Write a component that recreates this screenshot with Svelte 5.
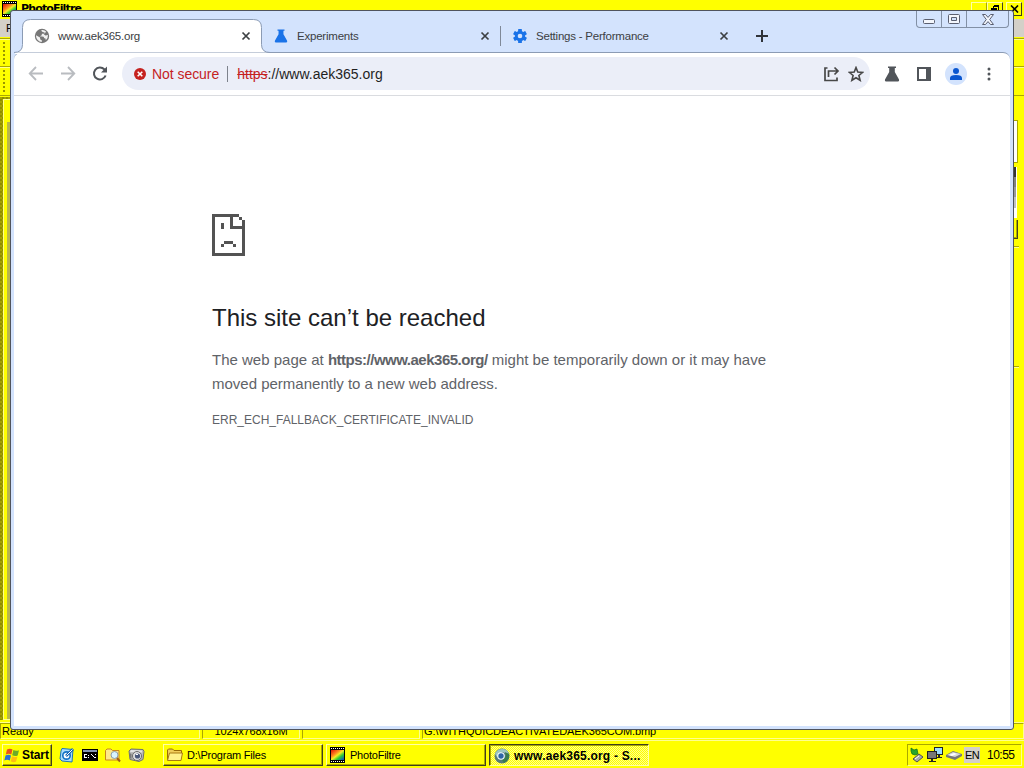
<script lang="ts">
  const tabs = [
    { title: 'www.aek365.org', icon: 'globe', active: true },
    { title: 'Experiments', icon: 'flask', active: false },
    { title: 'Settings - Performance', icon: 'gear', active: false },
  ];

  const tasks = [
    { label: 'D:\\Program Files', icon: 'folder', active: false },
    { label: 'PhotoFiltre', icon: 'film', active: false },
    { label: 'www.aek365.org - S...', icon: 'browser', active: true },
  ];

  // teeth of the settings gear, in degrees
  const teeth = [0, 60, 120];
  const perforations = [1, 3, 5, 7, 9, 11, 13];
</script>

{#snippet film()}
  <svg width="16" height="16" viewBox="0 0 16 16" shape-rendering="crispEdges">
    <defs>
      <linearGradient id="film-colors" x1="0" y1="0" x2="1" y2="1">
        <stop offset="0" stop-color="#e01008" />
        <stop offset=".35" stop-color="#ff8a20" />
        <stop offset=".5" stop-color="#f5ed20" />
        <stop offset=".7" stop-color="#28c838" />
        <stop offset="1" stop-color="#1040d0" />
      </linearGradient>
    </defs>
    <path fill="#000" d="M0 0h15v16H0z" />
    <path fill="url(#film-colors)" d="M1 3h13v10H1z" />
    {#each perforations as x}
      <path fill="#fff" d="M{x} 1h1v1h-1zM{x} 14h1v1h-1z" />
    {/each}
  </svg>
{/snippet}

{#snippet flask(color: string, size: number)}
  <svg width={size} height={size} viewBox="0 0 16 16">
    <path fill={color} d="M4 .5h8V2h-1.200v4l4.200 7.500q.6 2-1 2H2q-1.600 0-1-2L5.200 6V2H4z" />
  </svg>
{/snippet}

{#snippet tabIcon(name: string)}
  {#if name === 'globe'}
    <svg width="16" height="16" viewBox="0 0 16 16">
      <circle cx="8" cy="8" r="7.200" fill="#777" />
      <path fill="#fff" d="M2 7.200 6 9.500l.3 2 1.500.8v1.600C4.700 13.800 2 11 2 7.200zM7.200 2.200q3-.7 5 1.500L10.500 5.500 8 5.700 7.500 7.500 5.600 8.200 8 8.500l1.600.2.7 1.600 1.200.3.300 1.600q2.400-2 2.200-5.200l-2.600.4-1.600-1.100.9-1.800-2-.4-1-.8z" opacity=".9" />
    </svg>
  {:else if name === 'flask'}
    {@render flask('#1a73e8', 14)}
  {:else}
    <svg width="16" height="16" viewBox="-8 -8 16 16">
      {#each teeth as angle}
        <rect x="-1.900" y="-7" width="3.800" height="14" rx=".6" fill="#1a73e8" transform="rotate({angle})" />
      {/each}
      <circle r="5.200" fill="#1a73e8" />
      <circle r="2.300" fill="#d3e3fd" />
    </svg>
  {/if}
{/snippet}

<div class="desktop">
  <div class="photofiltre">
    <div class="pf-title">
      <span class="pf-icon">{@render film()}</span>
      <span class="pf-name">PhotoFiltre</span>
      <div class="pf-buttons">
        <span class="pf-btn faint"></span>
        <span class="pf-btn">
          <svg width="10" height="9" viewBox="0 0 10 9" fill="none" stroke="#000" shape-rendering="crispEdges"><path d="M3.500.500h5v5h-2M3 1.500h6M1.500 3.500h5v4h-5zM1 4.500h6M3.500 1v2" /></svg>
        </span>
        <span class="pf-btn close">
          <svg width="9" height="8" viewBox="0 0 9 8" stroke="#000" stroke-width="1.600"><path d="m1 .5 7 7m0-7-7 7" /></svg>
        </span>
      </div>
    </div>
    <div class="pf-menu">File</div>
    <div class="pf-toolbar first"><i></i></div>
    <div class="pf-toolbar"><i></i></div>
    <div class="pf-body">
      <div class="pf-canvas"><div></div></div>
      <div class="pf-panel">
        <div class="pf-preview"></div>
        <div class="pf-swatches"></div>
        <div class="pf-option"></div>
        <hr />
        <hr class="lower" />
      </div>
    </div>
    <div class="pf-status">
      <span class="ready">Ready</span>
      <span class="size">1024x768x16M</span>
      <span class="gap"></span>
      <span class="path">G:\WITHQUICDEACTIVATEDAEK365COM.bmp</span>
    </div>
  </div>

  <div class="taskbar">
    <button class="start">
      <svg width="17" height="17" viewBox="0 0 17 17">
        <path fill="#e9501d" d="M3 2.500q3-1.500 5.500 0L7.300 7.600q-2.700-1.500-5.500 0z" />
        <path fill="#6cab29" d="M9.400 3q2.700 1.400 5.600.200L13.700 8.500q-2.800 1.200-5.500-.300z" />
        <path fill="#2b70d5" d="M1.500 8.500q3-1.400 5.500 0L5.800 13.600q-2.700-1.500-5.500 0z" />
        <path fill="#ffbd12" d="M8 9.200q2.600 1.400 5.400.200l-1.300 5.200q-2.800 1.200-5.400-.300z" />
      </svg>
      Start
    </button>

    <div class="quick">
      <svg width="16" height="16" viewBox="0 0 16 16">
        <path fill="#a8dcfa" stroke="#1773bd" d="m3 1.500 11 1-1 12.500-10-1L1 12l1-8z" />
        <circle cx="7.500" cy="8.500" r="3.700" fill="#fff" stroke="#1473c5" stroke-width="1.700" />
        <path stroke="#1365b5" stroke-width="2.500" d="m7 9 7-7" /><path stroke="#fff" d="m7.500 8.500 6-6" />
      </svg>
      <svg width="16" height="16" viewBox="0 0 16 16" shape-rendering="crispEdges">
        <path fill="#000" d="M0 2h16v12H0z" /><path fill="#8495b4" d="M1 3h14v2H1z" />
        <path stroke="#fff" fill="none" d="M5 7.500H2.500v3H5M6.500 8v1m0 1v1M9 7l4 4m.500-4v1m0 2v1" />
      </svg>
      <svg width="16" height="16" viewBox="0 0 16 16">
        <path fill="#ffe889" stroke="#c88420" d="M.5 3.500 2 2h4l1.500 1.500H14v9.500H.5z" />
        <circle cx="9.500" cy="8" r="3.500" fill="#d8f3ff" stroke="#8b9caa" /><path stroke="#a25b16" stroke-width="2" d="m12 11 3 3.500" />
      </svg>
      <svg width="17" height="16" viewBox="0 0 17 16">
        <path fill="#b8b8b8" stroke="#707070" d="m1 4 2-2 12 .5 1 2-1 8-4 2-9-2z" />
        <path fill="#e4e4e4" d="m3 3 11 .5v2L2 5z" /><path fill="#777" d="m1.500 6 2 1v5l-1.500-1z" />
        <circle cx="9" cy="9" r="4.500" fill="#e0e0e0" stroke="#6a6a6a" />
        <circle cx="9.500" cy="9" r="2.600" fill="#4a587b" /><path fill="#fff" d="M8 7h2v1H8z" />
      </svg>
    </div>

    <div class="tasks">
      {#each tasks as task}
        <button class="task" class:active={task.active}>
          {#if task.icon === 'folder'}
            <svg width="16" height="16" viewBox="0 0 16 16">
              <path fill="#f1cd5a" stroke="#9a6b08" d="M.5 13V3l1-1h4l1.500 1.500h7.500V6" />
              <path fill="#fff18a" stroke="#a87a12" d="M.5 13.500 2.500 6h13l-1.500 7.500z" />
            </svg>
          {:else if task.icon === 'film'}
            {@render film()}
          {:else}
            <svg width="16" height="16" viewBox="0 0 16 16">
              <circle cx="8" cy="8" r="7.500" fill="#567b78" />
              <path fill="#9bc5c0" d="M1 6Q3 .5 9 1q4 0 6 5L8 4 3 9z" />
              <path fill="#397d4d" d="M15 6q1 6-5 9l-2-3 4-4-1-4z" />
              <circle cx="7" cy="8" r="3.800" fill="#f5ffff" /><circle cx="7" cy="8" r="2.700" fill="#2d65a6" />
            </svg>
          {/if}
          <span>{task.label}</span>
        </button>
      {/each}
    </div>

    <div class="tray">
      <svg width="16" height="16" viewBox="0 0 16 16">
        <path fill="#28a32b" stroke="#096d19" stroke-width=".7" d="m2 1 3 2 3-1 1 5-3 1-3-1-1-3z" />
        <path fill="#a9a9a9" stroke="#505050" d="m4 12 6-5 4 3-6 5z" /><path stroke="#fff" d="m6 12 4-3" />
      </svg>
      <svg width="17" height="16" viewBox="0 0 17 16" shape-rendering="crispEdges">
        <path fill="#9cdcff" stroke="#222" d="M7.500.5h8v7h-8z" /><path fill="#222" d="M11 8h2v2h-2zm-2 2h6v1H9z" />
        <path fill="#777" stroke="#222" d="M.5 4.500h9v7h-9z" /><path fill="#222" d="M4 12h2v2H4zm-2 2h7v1H2z" />
      </svg>
      <svg width="16" height="16" viewBox="0 0 16 16">
        <path fill="#777" d="m0 8 7-4 9 3v2l-7 4-9-3z" /><path fill="#d7d7d7" d="m1 8 6-3 8 2-6 3z" /><path fill="#fff" d="m3 8 5-2 3 1-5 2z" />
      </svg>
      <span class="lang">EN</span>
      <span class="clock">10:55</span>
    </div>
  </div>

  <div class="browser">
    <div class="tabstrip">
      {#each tabs as tab, i}
        <div class="tab" class:active={tab.active} class:divided={i === 1}>
          {#if tab.active}
            <!-- outline with the flared feet of the selected tab -->
            <svg class="tab-shape" width="256" height="35" viewBox="0 0 256 35">
              <path fill="#fff" stroke="#8b9bb4" d="M0 33.500q8.500 0 8.500-8V8.500q0-8 8-8h223q8 0 8 8v17q0 8 8.500 8" />
              <path fill="#fff" d="M1 34h254v1H1z" />
            </svg>
          {/if}
          <span class="tab-icon">{@render tabIcon(tab.icon)}</span>
          <span class="tab-title">{tab.title}</span>
          <svg class="tab-close" width="10" height="10" viewBox="0 0 10 10" stroke="#3c4043" stroke-width="1.700"><path d="m1.500 1.500 7 7m0-7-7 7" /></svg>
        </div>
      {/each}
      <svg class="new-tab" width="14" height="14" viewBox="0 0 14 14" stroke="#30343a" stroke-width="2"><path d="M7 1v12M1 7h12" /></svg>
      <div class="window-buttons">
        <span class="minimize"><svg width="12" height="5" viewBox="0 0 12 5"><rect x=".5" y=".5" width="11" height="4" rx="1" fill="#f3f6fc" stroke="#5a5f70" /></svg></span>
        <span><svg width="12" height="10" viewBox="0 0 12 10" fill="#f3f6fc" stroke="#5a5f70"><rect x=".5" y=".5" width="11" height="9" rx="1" /><path fill="#d3e3fd" d="M3.500 3.500h5v3h-5z" /></svg></span>
        <span class="wide"><svg width="12" height="11" viewBox="0 0 12 11" fill="#f3f6fc" stroke="#5a5f70"><path d="M.5.500h3L6 3.400 8.500.500h3L7.700 5.500l3.800 5h-3L6 7.600l-2.500 2.900h-3l3.800-5z" /></svg></span>
      </div>
    </div>

    <div class="page">
      <div class="toolbar">
        <div class="nav">
          <svg width="16" height="16" viewBox="0 0 16 16" fill="none" stroke="#b9bcc0" stroke-width="1.800"><path d="M15 7.500H2M8 1 1.700 7.500 8 14" /></svg>
          <svg width="16" height="16" viewBox="0 0 16 16" fill="none" stroke="#b9bcc0" stroke-width="1.800"><path d="M1 7.500h13M8 1l6.300 6.500L8 14" /></svg>
          <svg width="16" height="16" viewBox="0 0 16 16"><path fill="none" stroke="#51555a" stroke-width="2" d="M13.600 9.500A6 6 0 1 1 12.300 3.300L14 5" /><path fill="#51555a" d="M15 .5v6H9z" /></svg>
        </div>
        <div class="omnibox">
          <svg width="12" height="12" viewBox="0 0 12 12"><circle cx="6" cy="6" r="6" fill="#c5221f" /><path stroke="#fff" stroke-width="1.600" d="m3.700 3.700 4.600 4.600m0-4.600L3.700 8.300" /></svg>
          <span class="insecure">Not secure</span>
          <i></i>
          <span class="url"><s>https</s>://www.aek365.org</span>
          <div class="omni-actions">
            <svg width="17" height="16" viewBox="0 0 17 16" fill="none" stroke="#474747" stroke-width="1.700"><path d="M4.500 2H2v12.500h12V11.500M5.500 11V5H14M11.500 1.500 15 5l-3.500 3.500" /></svg>
            <svg width="16" height="16" viewBox="0 0 16 16" fill="none" stroke="#474747" stroke-width="1.600"><path d="m8 1.600 1.800 4.500 4.900.3-3.800 3.100 1.200 4.800L8 11.700l-4.100 2.600 1.200-4.800-3.800-3.100 4.900-.3z" /></svg>
          </div>
        </div>
        <div class="actions">
          {@render flask('#51555a', 16)}
          <svg class="side-panel" width="16" height="14" viewBox="0 0 16 14"><path fill="#51555a" d="M1 0h14v14H1zm2 2v10h7V2z" fill-rule="evenodd" /></svg>
          <span class="avatar">
            <svg width="14" height="14" viewBox="0 0 14 14" fill="#0b57d0"><circle cx="7" cy="4" r="3" /><path d="M1 13v-2q0-3 6-3t6 3v2z" /></svg>
          </span>
          <svg class="more" width="4" height="14" viewBox="0 0 4 14" fill="#51555a"><circle cx="2" cy="2" r="1.500" /><circle cx="2" cy="7" r="1.500" /><circle cx="2" cy="12" r="1.500" /></svg>
        </div>
      </div>

      <main>
        <svg class="sad-page" width="33" height="42" viewBox="0 0 33 42" fill="#535353" shape-rendering="crispEdges">
          <path d="M0 0h27v3H3v36h27V15H18V3h3v9h9V6h3v36H0zM27 3h3v3h-3zM9 9h3v6H9zM12 27h9v3h-9zM9 30h3v3H9zM21 30h3v3h-3z" />
        </svg>
        <h1>This site can’t be reached</h1>
        <p>The web page at <b>https://www.aek365.org/</b> might be temporarily down or it may have<br />moved permanently to a new web address.</p>
        <div class="error-code">ERR_ECH_FALLBACK_CERTIFICATE_INVALID</div>
      </main>
    </div>
  </div>
</div>

<style>
  :global(body) {
    overflow: hidden;
  }

  .desktop {
    position: relative;
    display: flex;
    flex-direction: column;
    width: 1024px;
    height: 768px;
    overflow: hidden;
    background: #ff0;
    color: #000;
    font-family: "Liberation Sans", Arial, sans-serif;
  }

  .desktop * {
    box-sizing: border-box;
  }

  svg {
    display: block;
    flex: none;
  }

  /* Image editor behind the browser */
  .photofiltre {
    display: flex;
    flex-direction: column;
    height: 740px;
  }

  .pf-title {
    display: flex;
    height: 19px;
    padding: 0 0 0 2px;
  }

  .pf-icon {
    margin-top: 1px;
  }

  .pf-name {
    margin: 2px 0 0 3px;
    font: bold 11px/13px "DejaVu Sans", sans-serif;
    letter-spacing: -0.85px;
  }

  .pf-buttons {
    display: flex;
    margin: 2px 2px 0 auto;
  }

  .pf-btn {
    display: flex;
    justify-content: center;
    width: 16px;
    height: 14px;
    padding-top: 2px;
    border: 1px solid;
    border-color: #ffffa8 #403f20 #403f20 #ffffa8;
  }

  .pf-btn.faint {
    border-right-color: #aaa800;
  }

  .pf-btn.close {
    margin-left: 3px;
  }

  .pf-menu {
    height: 18px;
    padding: 3px 6px;
    background: #d4d0c8;
    font-size: 11px;
    line-height: 13px;
  }

  .pf-toolbar {
    height: 29px;
    padding: 3px;
    border-top: 1px solid #aaa800;
    box-shadow: inset 0 1px #ffff90;
  }

  .pf-toolbar.first {
    height: 28px;
    margin-top: 1px;
  }

  .pf-toolbar i {
    display: block;
    width: 2px;
    height: 22px;
    background: repeating-linear-gradient(#999700 0 2px, transparent 2px 4px);
  }

  .pf-body {
    display: flex;
    justify-content: space-between;
    flex: 1;
    border-top: 1px solid #aaa800;
  }

  .pf-canvas {
    width: 12px;
    margin: 1px 0 2px;
    padding: 2px 0 0 3px;
    background: repeating-conic-gradient(#8f8d00 0 25%, #a5a300 0 50%) 0 0 / 4px 4px;
  }

  .pf-canvas div {
    height: 100%;
    background: linear-gradient(90deg, #ff0 3px, #b8b64c 3px) 0 22px no-repeat, #ff0;
    border: 1px solid #ffff90;
  }

  .pf-panel {
    width: 14px;
    padding: 24px 0 0 3px;
  }

  .pf-preview {
    width: 5px;
    height: 43px;
    background: #fff;
    border: 1px solid #aaa800;
    border-left: 0;
  }

  .pf-swatches {
    width: 4px;
    height: 51px;
    margin-top: 4px;
    background: linear-gradient(#333 0 10px, #808080 10px 20px, #999 20px 30px, #c0c0c0 30px 41px, #fff 41px);
    border-right: 1px solid #fff;
  }

  .pf-option {
    width: 5px;
    height: 19px;
    margin-top: 2px;
    border: 1px solid #403f20;
    border-width: 0 1px 1px 0;
    box-shadow: inset -1px -1px #aaa800;
  }

  .pf-panel hr {
    width: 6px;
    height: 2px;
    margin: 7px 0 0;
    border: 0;
    border-top: 1px solid #aaa800;
    background: #ffff90;
  }

  .pf-panel hr.lower {
    margin-top: 118px;
  }

  .pf-status {
    display: flex;
    height: 18px;
    gap: 2px;
    border-top: 1px solid #ffff90;
    font-size: 11px;
    line-height: 15px;
  }

  .pf-status span {
    height: 16px;
    border: 1px solid;
    border-color: #aaa800 #ffff90 #ffff90 #aaa800;
    white-space: nowrap;
  }

  .pf-status .ready {
    width: 200px;
    padding-left: 1px;
  }

  .pf-status .size {
    width: 98px;
    text-align: center;
    letter-spacing: -0.2px;
  }

  .pf-status .gap {
    width: 118px;
  }

  .pf-status .path {
    flex: 1;
    padding-left: 1px;
    letter-spacing: -0.12px;
  }

  /* Taskbar */
  .taskbar {
    display: flex;
    height: 28px;
    padding: 3px 2px 0;
    border-top: 1px solid #ffff90;
    font-size: 11px;
  }

  button {
    display: flex;
    align-items: center;
    height: 22px;
    padding: 0;
    background: #ff0;
    border: 1px solid;
    border-color: #ffffa8 #403f20 #403f20 #ffffa8;
    box-shadow: inset -1px -1px #aaa800;
    color: #000;
    font-family: inherit;
    font-size: 11px;
  }

  .start {
    width: 50px;
    gap: 1px;
    padding-left: 1px;
    font: bold 12px "Liberation Sans", sans-serif;
    letter-spacing: -0.1px;
  }

  .quick {
    display: flex;
    gap: 7px;
    width: 111px;
    padding: 3px 0 0 7px;
  }

  .tasks {
    display: flex;
    gap: 3px;
  }

  .task {
    width: 160px;
    gap: 4px;
    padding-left: 3px;
    letter-spacing: -0.22px;
    white-space: nowrap;
  }

  .task.active {
    padding: 2px 0 0 4px;
    background: repeating-conic-gradient(#ff0 0 25%, #ffff8c 0 50%) 0 0 / 2px 2px;
    border-color: #403f20 #ffffa8 #ffffa8 #403f20;
    box-shadow: inset 1px 1px #aaa800;
    font-weight: bold;
    font-size: 12px;
    letter-spacing: 0.2px;
  }

  .tray {
    display: flex;
    align-items: center;
    width: 115px;
    height: 22px;
    margin-left: auto;
    padding-left: 1px;
    gap: 2px;
    border: 1px solid;
    border-color: #aaa800 #ffff90 #ffff90 #aaa800;
  }

  .lang {
    width: 16px;
    height: 16px;
    background: #d4d0c8;
    line-height: 17px;
    text-align: center;
    letter-spacing: -0.6px;
  }

  .clock {
    margin-left: 5px;
    font-size: 12px;
    letter-spacing: -0.5px;
  }

  /* Browser window */
  .browser {
    position: absolute;
    left: 10px;
    top: 10px;
    display: flex;
    flex-direction: column;
    width: 1004px;
    height: 720px;
    padding: 0 3px 3px;
    background: #d3e3fd;
    border: 1px solid #50545d;
    border-radius: 3px;
  }

  .tabstrip {
    display: flex;
    align-items: flex-end;
    height: 41px;
    padding-left: 9px;
  }

  .tab {
    position: relative;
    display: flex;
    align-items: center;
    width: 239px;
    height: 33px;
    padding: 0 11px;
    color: #3c4043;
    font-size: 11.5px;
    letter-spacing: -0.22px;
  }

  .tab.divided::after {
    content: '';
    position: absolute;
    right: 0;
    top: 7px;
    width: 1px;
    height: 20px;
    background: #7f8998;
  }

  .tab-shape {
    position: absolute;
    left: -9px;
    top: 0;
    z-index: 1;
  }

  .tab-icon {
    display: flex;
    justify-content: center;
    width: 16px;
    margin-right: 8px;
  }

  .tab-icon,
  .tab-title,
  .tab-close {
    position: relative;
    z-index: 2;
  }

  .tab-close {
    margin-left: auto;
  }

  .new-tab {
    margin: 0 0 9px 15px;
  }

  .window-buttons {
    display: flex;
    align-self: flex-start;
    height: 17px;
    margin: 0 1px 0 auto;
    border: 1px solid #8290a5;
    border-top: 0;
    border-radius: 0 0 4px 4px;
  }

  .window-buttons span {
    display: flex;
    align-items: center;
    justify-content: center;
    width: 25px;
    border-right: 1px solid #8290a5;
  }

  .window-buttons .minimize {
    padding-top: 5px;
  }

  .window-buttons .wide {
    width: 41px;
    border-right: 0;
  }

  .page {
    flex: 1;
    background: #fff;
    border-top: 1px solid #8b9bb4;
    border-radius: 7px 7px 0 0;
  }

  .toolbar {
    display: flex;
    align-items: center;
    height: 43px;
    padding: 0 18px 1px 14px;
    border-bottom: 1px solid #dadce0;
  }

  .nav {
    display: flex;
    gap: 16px;
    width: 94px;
  }

  .omnibox {
    display: flex;
    align-items: center;
    width: 748px;
    height: 33px;
    padding: 0 6px 0 12px;
    background: #ebeef8;
    border-radius: 17px;
    font-size: 14px;
  }

  .insecure {
    margin-left: 6px;
    color: #c5221f;
    letter-spacing: -0.05px;
  }

  .omnibox i {
    width: 1px;
    height: 16px;
    margin: 0 9px 0 8px;
    background: #7d828c;
  }

  .url {
    color: #1f1f1f;
  }

  .url s {
    color: #c5221f;
  }

  .insecure,
  .url {
    padding-top: 1px;
  }

  .omni-actions {
    display: flex;
    gap: 8px;
    margin-left: auto;
  }

  .actions {
    display: flex;
    align-items: center;
    margin-left: 14px;
  }

  .side-panel {
    margin: 0 13px 0 16px;
  }

  .more {
    margin-left: 20px;
  }

  .avatar {
    display: flex;
    align-items: center;
    justify-content: center;
    width: 22px;
    height: 22px;
    background: #d3e3fd;
    border-radius: 50%;
  }

  main {
    padding: 118px 0 0 198px;
    color: #5f6368;
    font-size: 15px;
    line-height: 24px;
  }

  h1 {
    margin: 47px 0 15px;
    color: #202124;
    font-size: 24px;
    font-weight: 400;
    line-height: 30px;
  }

  p {
    margin: 0;
    white-space: nowrap;
  }

  b {
    letter-spacing: -0.5px;
  }

  .error-code {
    margin-top: 12px;
    font-size: 12px;
  }
</style>
